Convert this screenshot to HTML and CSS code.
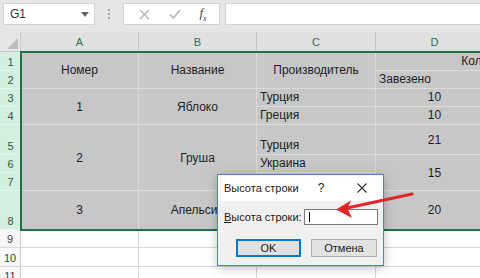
FILE: index.html
```html
<!DOCTYPE html>
<html lang="ru">
<head>
    <meta charset="UTF-8">
    <title>Высота строки</title>
    <link rel="stylesheet" href="styles.css">
</head>
<body>
    <div class="app">
        <div class="toolbar">
            <div class="namebox">
                <span>G1</span>
                <svg class="caret" width="8" height="5" viewBox="0 0 8 5"><path d="M0 0h8L4 5z" fill="#666"/></svg>
            </div>
            <div class="grip"><i></i><i></i><i></i></div>
            <div class="fbtns">
                <svg class="fb-icon" width="11" height="11" viewBox="0 0 11 11"><path d="M1 1l9 9M10 1l-9 9" stroke="#b4b4b4" stroke-width="1.3" fill="none"/></svg>
                <svg class="fb-icon" width="12" height="10" viewBox="0 0 12 10"><path d="M1 5.5l3.5 3.5L11 1" stroke="#b4b4b4" stroke-width="1.6" fill="none"/></svg>
                <span class="fx">f<sub>x</sub></span>
            </div>
            <div class="finput"></div>
        </div>

        <div class="sheet">
            <div class="grid">
                <!-- header -->
                <div class="corner"></div>
                <div class="colhead">A</div>
                <div class="colhead">B</div>
                <div class="colhead">C</div>
                <div class="colhead">D</div>
                <div class="colhead"></div>

                <!-- rows 1-2 -->
                <div class="rowhead">1</div>
                <div class="sel ctr span-r2">Номер</div>
                <div class="sel ctr span-r2">Название</div>
                <div class="sel ctr span-r2">Производитель</div>
                <div class="sel hc span-c2">Количество</div>
                <div class="rowhead">2</div>
                <div class="sel">Завезено</div>
                <div class="sel"></div>

                <!-- rows 3-4 -->
                <div class="rowhead">3</div>
                <div class="sel ctr span-r2">1</div>
                <div class="sel ctr span-r2">Яблоко</div>
                <div class="sel">Турция</div>
                <div class="sel hc">10</div>
                <div class="sel"></div>
                <div class="rowhead">4</div>
                <div class="sel">Греция</div>
                <div class="sel hc">10</div>
                <div class="sel"></div>

                <!-- rows 5-7 -->
                <div class="rowhead">5</div>
                <div class="sel ctr span-r3">2</div>
                <div class="sel ctr span-r3">Груша</div>
                <div class="sel">Турция</div>
                <div class="sel ctr">21</div>
                <div class="sel"></div>
                <div class="rowhead">6</div>
                <div class="sel">Украина</div>
                <div class="sel ctr span-r2">15</div>
                <div class="sel span-r2"></div>
                <div class="rowhead">7</div>
                <div class="sel"></div>

                <!-- row 8 -->
                <div class="rowhead">8</div>
                <div class="sel ctr">3</div>
                <div class="sel ctr">Апельсин</div>
                <div class="sel"></div>
                <div class="sel ctr">20</div>
                <div class="sel"></div>

                <!-- empty rows -->
                <div class="rowhead plain">9</div>
                <div></div><div></div><div></div><div></div><div></div>
                <div class="rowhead plain">10</div>
                <div></div><div></div><div></div><div></div><div></div>
                <div class="rowhead plain">11</div>
                <div></div><div></div><div></div><div></div><div></div>
            </div>
            <div class="selection"></div>
        </div>

        <div class="dialog">
            <div class="dlg-title">
                <span class="dlg-caption">Высота строки</span>
                <span class="dlg-help">?</span>
                <svg class="dlg-close" width="10" height="10" viewBox="0 0 10 10"><path d="M0.5 0.5l9 9M9.5 0.5l-9 9" stroke="#333" stroke-width="1.1" fill="none"/></svg>
            </div>
            <div class="dlg-body">
                <div class="dlg-row">
                    <label><u>В</u>ысота строки:</label>
                    <div class="dlg-input"><i class="cursor"></i></div>
                </div>
                <div class="dlg-buttons">
                    <button class="btn btn-default">OK</button>
                    <button class="btn">Отмена</button>
                </div>
            </div>
        </div>

        <svg class="arrow" width="90" height="36" viewBox="0 0 90 36">
            <path d="M82 6L17 20" stroke="#e0262b" stroke-width="3.2" stroke-linecap="round" fill="none"/>
            <path d="M6 21.5L21 12.5L17.5 20.5L22 30z" fill="#e0262b"/>
        </svg>
    </div>
</body>
</html>
```

FILE: styles.css
```css
body {
    margin: 0;
    font-family: "Liberation Sans", Arial, sans-serif;
}
.app {
    position: relative;
    width: 480px;
    height: 278px;
    overflow: hidden;
    background: #fff;
}

/* formula bar */
.toolbar {
    height: 32px;
    box-sizing: border-box;
    padding: 3px 0 0 3px;
    display: flex;
    align-items: flex-start;
    background: #e6e6e6;
}
.namebox {
    width: 92px;
    height: 22px;
    box-sizing: border-box;
    background: #fff;
    border: 1px solid #d4d4d4;
    display: flex;
    align-items: center;
    justify-content: space-between;
    padding: 0 5px 0 6px;
    font-size: 12px;
    color: #333;
}
.grip {
    width: 28px;
    height: 22px;
    display: flex;
    flex-direction: column;
    align-items: center;
    justify-content: center;
    gap: 2px;
}
.grip i {
    width: 2px;
    height: 2px;
    background: #a8a8a8;
}
.fbtns {
    width: 97px;
    height: 22px;
    box-sizing: border-box;
    background: #fff;
    border: 1px solid #d4d4d4;
    display: flex;
    align-items: center;
    justify-content: space-around;
    padding: 0 3px 0 6px;
}
.fx {
    font-family: "Liberation Serif", serif;
    font-style: italic;
    font-size: 13px;
    color: #444;
}
.fx sub {
    font-size: 8px;
}
.finput {
    flex: 1;
    height: 22px;
    box-sizing: border-box;
    margin-left: 5px;
    background: #fff;
    border: 1px solid #d4d4d4;
    border-right: 0;
}

/* sheet */
.sheet {
    position: relative;
    height: 246px;
    overflow: hidden;
}
.grid {
    display: grid;
    grid-template-columns: 21px 118px 118px 119px 118px 118px;
    grid-template-rows: 20px 19px 18px 18px 18px 30px 18px 18px 39px 18px 19px 18px;
    width: 612px;
    font-size: 12px;
    color: #1e1e1e;
}
.grid > div {
    box-sizing: border-box;
    border-right: 1px solid #d6d6d6;
    border-bottom: 1px solid #d6d6d6;
    display: flex;
    align-items: flex-end;
    padding: 0 3px 2px;
    white-space: nowrap;
    overflow: hidden;
}
.grid > .corner {
    background: #e6e6e6;
    border-color: #c8c8c8;
    justify-content: flex-end;
    padding: 0 2px 2px;
}
.corner::after {
    content: "";
    border-left: 11px solid transparent;
    border-bottom: 11px solid #bcbcbc;
}
.grid > .colhead {
    background: #e0e0e0;
    border-right-color: #c4c4c4;
    border-bottom-color: #c4c4c4;
    justify-content: center;
    align-items: center;
    padding: 0;
    font-size: 11px;
    color: #2f6e4d;
}
.grid > .rowhead {
    background: #d2efdf;
    border-bottom-color: #e4f5eb;
    border-right: 0;
    justify-content: center;
    padding: 0 0 2px;
    font-size: 11px;
    color: #2c5a43;
}
.grid > .rowhead.plain {
    background: #f7f7f7;
    border-bottom-color: #dcdcdc;
    border-right: 1px solid #c8c8c8;
    color: #444;
}
.grid > .sel {
    background: #c7c7c7;
    border-color: #dadada;
}
.grid > .ctr {
    justify-content: center;
    align-items: center;
    padding: 0 3px;
}
.grid > .hc {
    justify-content: center;
}
.span-r2 { grid-row: span 2; }
.span-r3 { grid-row: span 3; }
.span-c2 { grid-column: span 2; }

.selection {
    position: absolute;
    left: 20px;
    top: 19px;
    width: 480px;
    height: 180px;
    box-sizing: border-box;
    border: 2px solid #217346;
    pointer-events: none;
}

/* dialog */
.dialog {
    position: absolute;
    left: 217px;
    top: 174px;
    width: 167px;
    height: 92px;
    box-sizing: border-box;
    border: 1px solid #4a86c5;
    background: #f0f0f0;
    box-shadow: 0 2px 10px rgba(0, 0, 0, 0.25);
    font-size: 11px;
    color: #1a1a1a;
}
.dlg-title {
    height: 26px;
    background: #fff;
    display: flex;
    align-items: center;
    padding-left: 6px;
}
.dlg-caption {
    flex: 1;
    white-space: nowrap;
}
.dlg-help {
    width: 12px;
    text-align: center;
    margin-right: 30px;
    font-size: 12px;
}
.dlg-close {
    margin-right: 16px;
}
.dlg-body {
    padding: 8px 5px 0 6px;
}
.dlg-row {
    display: flex;
    align-items: center;
    justify-content: space-between;
}
.dlg-row label {
    white-space: nowrap;
}
.dlg-input {
    width: 74px;
    height: 16px;
    flex-shrink: 0;
    box-sizing: border-box;
    background: #fff;
    border: 1px solid #7a7a7a;
    padding: 2px 0 0 4px;
}
.cursor {
    display: block;
    width: 1px;
    height: 10px;
    background: #000;
}
.dlg-buttons {
    display: flex;
    gap: 10px;
    margin: 14px 0 0 12px;
}
.btn {
    width: 66px;
    height: 18px;
    box-sizing: border-box;
    padding: 0;
    background: #e1e1e1;
    border: 1px solid #adadad;
    font-family: inherit;
    font-size: 11px;
    color: #1a1a1a;
}
.btn-default {
    width: 65px;
    border: 2px solid #0078d7;
}

.arrow {
    position: absolute;
    left: 330px;
    top: 188px;
}
```
